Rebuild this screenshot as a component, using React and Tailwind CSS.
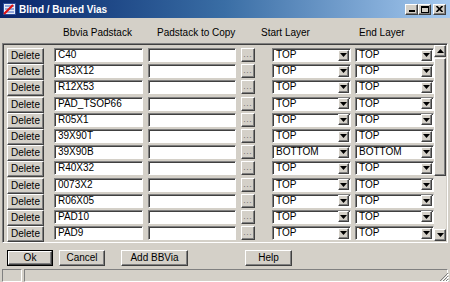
import React from 'react';

const rows = [
  ['C40', 'TOP', 'TOP'],
  ['R53X12', 'TOP', 'TOP'],
  ['R12X53', 'TOP', 'TOP'],
  ['PAD_TSOP66', 'TOP', 'TOP'],
  ['R05X1', 'TOP', 'TOP'],
  ['39X90T', 'TOP', 'TOP'],
  ['39X90B', 'BOTTOM', 'BOTTOM'],
  ['R40X32', 'TOP', 'TOP'],
  ['0073X2', 'TOP', 'TOP'],
  ['R06X05', 'TOP', 'TOP'],
  ['PAD10', 'TOP', 'TOP'],
  ['PAD9', 'TOP', 'TOP'],
];

const raised =
  'bg-[#d4d0c8] border border-t-white border-l-white border-b-[#404040] border-r-[#404040] shadow-[inset_-1px_-1px_0_#808080]';
const sunken =
  'bg-white border border-t-[#808080] border-l-[#808080] border-b-white border-r-white shadow-[inset_1px_1px_0_#404040]';

function Arrow({ up }) {
  return (
    <svg width="7" height="4" viewBox="0 0 7 4">
      <path d={up ? 'M3.5 0 L7 4 L0 4 Z' : 'M0 0 L7 0 L3.5 4 Z'} fill="#000" />
    </svg>
  );
}

function Select({ value }) {
  return (
    <div className={`${sunken} w-[79px] h-[14px] flex items-center`}>
      <span className="flex-1 pl-[3px] leading-none">{value}</span>
      <div className={`${raised} w-[11px] h-[11px] mr-[1px] flex items-center justify-center`}>
        <Arrow />
      </div>
    </div>
  );
}

function Btn({ children, w, def }) {
  const b = (
    <div className={`${raised} h-full flex items-center justify-center leading-none`}>{children}</div>
  );
  return (
    <div className={`${w} h-[16px] ${def ? 'border border-black' : ''}`}>{b}</div>
  );
}

export default function App() {
  return (
    <div
      className="w-[450px] h-[282px] bg-[#d4d0c8] flex flex-col overflow-hidden text-black text-[10px]"
      style={{ fontFamily: '"Liberation Sans Narrow", "Liberation Sans", Arial, sans-serif' }}
    >
      {/* title bar */}
      <div className="h-[18px] flex items-center pl-[3px] pr-[4px] bg-gradient-to-r from-[#0a246a] via-[#3a6ea5] to-[#a6caf0]">
        <svg width="13" height="12" viewBox="0 0 13 12">
          <rect x="0.5" y="0.5" width="12" height="11" fill="#e8eef8" stroke="#2a4a9a" />
          <path d="M2 3 H11 M2 6 H11 M2 9 H11" stroke="#3a5fbf" strokeWidth="1" />
          <path d="M1 11 L10 2" stroke="#e01010" strokeWidth="2.2" />
        </svg>
        <span
          className="ml-[3px] text-white font-bold text-[10px]"
          style={{ fontFamily: '"Liberation Sans", Arial, sans-serif' }}
        >
          Blind / Buried Vias
        </span>
        <div className="ml-auto flex items-center">
          <div className={`${raised} w-[13px] h-[11px] flex items-end justify-center pb-[2px]`}>
            <div className="w-[6px] h-[2px] bg-black" />
          </div>
          <div className={`${raised} w-[13px] h-[11px] flex items-center justify-center`}>
            <div className="w-[8px] h-[7px] border border-black border-t-2" />
          </div>
          <div className={`${raised} w-[13px] h-[11px] ml-[2px] flex items-center justify-center`}>
            <svg width="7" height="6" viewBox="0 0 7 6">
              <path d="M0.5 0 L6.5 6 M6.5 0 L0.5 6" stroke="#000" strokeWidth="1.6" />
            </svg>
          </div>
        </div>
      </div>

      {/* column headers */}
      <div className="h-[25px] flex pt-[10px] leading-none">
        <div className="w-[63px]" />
        <div className="w-[94px]">Bbvia Padstack</div>
        <div className="w-[104px]">Padstack to Copy</div>
        <div className="w-[98px]">Start Layer</div>
        <div>End Layer</div>
      </div>

      {/* grid */}
      <div className="mx-[2px] h-[200px] border border-t-[#808080] border-l-[#808080] border-b-white border-r-white shadow-[inset_1px_1px_0_#404040] flex p-[1px]">
        <div className="flex-1 flex flex-col pt-[2px]">
          {rows.map(([name, start, end], i) => (
            <div key={i} className="h-[16.2px] flex items-center shrink-0">
              <div className="ml-[3px] w-[37px] h-[14px]">
                <Btn w="w-[37px]">Delete</Btn>
              </div>
              <div className={`${sunken} ml-[10px] w-[89px] h-[14px] flex items-center pl-[3px] leading-none`}>
                {name}
              </div>
              <div className={`${sunken} ml-[5px] w-[88px] h-[14px]`} />
              <div className={`${raised} ml-[5px] w-[14px] h-[14px] flex items-end justify-center pb-[3px]`}>
                <span className="text-[7px] leading-none tracking-[1px] text-[#404040]">...</span>
              </div>
              <div className="ml-[17px]">
                <Select value={start} />
              </div>
              <div className="ml-[4px]">
                <Select value={end} />
              </div>
            </div>
          ))}
        </div>
        {/* scrollbar */}
        <div className="w-[12px] flex flex-col bg-[#e4e1db]">
          <div className={`${raised} h-[12px] flex items-center justify-center`}>
            <Arrow up />
          </div>
          <div className={`${raised} h-[118px] mt-[1px]`} />
          <div className="flex-1" />
          <div className={`${raised} h-[12px] flex items-center justify-center`}>
            <Arrow />
          </div>
        </div>
      </div>

      {/* buttons */}
      <div className="mt-[7px] h-[16px] flex items-center">
        <div className="ml-[7px]">
          <Btn w="w-[46px]" def>Ok</Btn>
        </div>
        <div className="ml-[6px]">
          <Btn w="w-[46px]">Cancel</Btn>
        </div>
        <div className="ml-[16px]">
          <Btn w="w-[67px]">Add BBVia</Btn>
        </div>
        <div className="ml-[57px]">
          <Btn w="w-[47px]">Help</Btn>
        </div>
      </div>

      {/* status bar */}
      <div className="mt-[3px] flex-1 flex px-[2px] gap-[2px] relative">
        <div className="w-[20px] border border-t-[#808080] border-l-[#808080] border-b-white border-r-white" />
        <div className="flex-1 border border-t-[#808080] border-l-[#808080] border-b-white border-r-white" />
        <svg className="absolute right-[1px] bottom-[0px]" width="11" height="11" viewBox="0 0 11 11">
          <path d="M10 2 L2 10 M10 5 L5 10 M10 8 L8 10" stroke="#808080" strokeWidth="1" />
          <path d="M11 3 L3 11 M11 6 L6 11 M11 9 L9 11" stroke="#fff" strokeWidth="1" />
        </svg>
      </div>
    </div>
  );
}
